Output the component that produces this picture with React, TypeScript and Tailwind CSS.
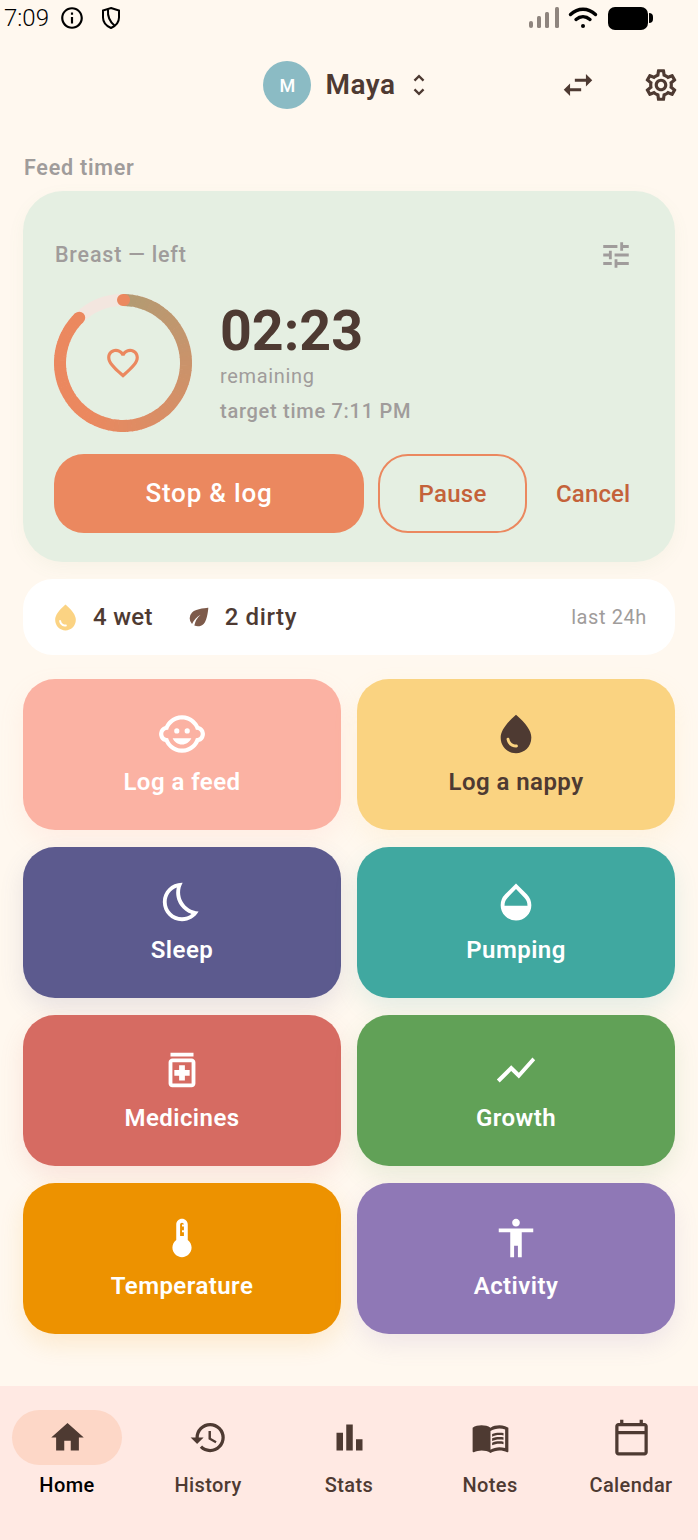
import React from 'react';
import {
  MdAccessibility,
  MdBarChart,
  MdDeviceThermostat,
  MdEco,
  MdFavoriteBorder,
  MdHistory,
  MdHome,
  MdMenuBook,
  MdOpacity,
  MdOutlineBedtime,
  MdOutlineCalendarToday,
  MdOutlineChildCare,
  MdOutlineInfo,
  MdOutlineMedication,
  MdOutlineSettings,
  MdShowChart,
  MdSwapHoriz,
  MdTune,
  MdUnfoldMore,
  MdWaterDrop,
} from 'react-icons/md';

const tiles = [
  { label: 'Log a feed', Icon: MdOutlineChildCare, size: 50, box: 'bg-[#fbb2a3] text-white shadow-[0_10px_24px_rgba(252,176,161,0.14)]' },
  { label: 'Log a nappy', Icon: MdWaterDrop, size: 46, box: 'bg-[#fad381] text-[#4e3a32] shadow-[0_10px_24px_rgba(251,211,131,0.14)]' },
  { label: 'Sleep', Icon: MdOutlineBedtime, size: 46, box: 'bg-[#5c5a8e] text-white shadow-[0_10px_24px_rgba(92,90,142,0.14)]' },
  { label: 'Pumping', Icon: MdOpacity, size: 46, box: 'bg-[#40a8a0] text-white shadow-[0_10px_24px_rgba(64,168,160,0.14)]' },
  { label: 'Medicines', Icon: MdOutlineMedication, size: 46, box: 'bg-[#d66b62] text-white shadow-[0_10px_24px_rgba(214,107,98,0.14)]' },
  { label: 'Growth', Icon: MdShowChart, size: 46, box: 'bg-[#61a157] text-white shadow-[0_10px_24px_rgba(97,161,87,0.14)]' },
  { label: 'Temperature', Icon: MdDeviceThermostat, size: 46, box: 'bg-[#ed9200] text-white shadow-[0_10px_24px_rgba(237,146,0,0.14)]' },
  { label: 'Activity', Icon: MdAccessibility, size: 46, box: 'bg-[#8f78b6] text-white shadow-[0_10px_24px_rgba(143,120,182,0.14)]' },
];

const navItems = [
  { label: 'Home', Icon: MdHome, active: true },
  { label: 'History', Icon: MdHistory, active: false },
  { label: 'Stats', Icon: MdBarChart, active: false },
  { label: 'Notes', Icon: MdMenuBook, active: false },
  { label: 'Calendar', Icon: MdOutlineCalendarToday, active: false },
];

// progress ring, split into short arcs so the colour can sweep from tan to orange
const TimerRing = () => {
  const cx = 69;
  const cy = 69;
  const r = 63;
  const point = (deg: number) => {
    const rad = ((deg - 90) * Math.PI) / 180;
    return `${cx + r * Math.cos(rad)} ${cy + r * Math.sin(rad)}`;
  };
  const from = [178, 155, 115];
  const to = [235, 136, 95];
  const segments = [];
  for (let a = 0; a < 316; a += 4) {
    const t = Math.min(a / 210, 1);
    const c = from.map((v, i) => Math.round(v + (to[i] - v) * t));
    segments.push(
      <path
        key={a}
        d={`M${point(a)} A${r} ${r} 0 0 1 ${point(Math.min(a + 4.6, 316))}`}
        stroke={`rgb(${c.join(',')})`}
        strokeWidth={12}
        fill="none"
      />,
    );
  }
  return (
    <svg width={138} height={138} viewBox="0 0 138 138">
      <circle cx={cx} cy={cy} r={r} stroke="#f3e6df" strokeWidth={12} fill="none" />
      {segments}
      <path
        d={`M${point(0)} A${r} ${r} 0 0 1 ${point(1)}`}
        stroke="#eb885f"
        strokeWidth={12}
        strokeLinecap="round"
        fill="none"
      />
      <path
        d={`M${point(315)} A${r} ${r} 0 0 1 ${point(316)}`}
        stroke="#eb885f"
        strokeWidth={12}
        strokeLinecap="round"
        fill="none"
      />
    </svg>
  );
};

const StatusBar = () => (
  <div className="flex h-[36px] items-center justify-between pl-[4px] pr-[45px] text-black">
    <div className="flex items-center">
      <span className="text-[24px] font-light leading-none">7:09</span>
      <MdOutlineInfo size={26} className="ml-[10px]" />
      <svg width={24} height={24} viewBox="0 0 24 24" fill="none" stroke="currentColor" strokeWidth={2} className="ml-[14px]">
        <path d="M12 2 20 4.500v7c0 4.600-3.200 8.400-8 10.500-4.800-2.100-8-5.900-8-10.500v-7z" />
        <path d="M9 3.500c-.5 6 1.500 12 6.500 16" />
      </svg>
    </div>
    <div className="flex items-center">
      <svg width={31} height={22} viewBox="0 0 31 22" fill="#8f857e">
        <rect x={0} y={14} width={4} height={7} rx={2} />
        <rect x={8} y={9} width={4} height={12} rx={1.5} />
        <rect x={16} y={5} width={4} height={16} rx={1.5} />
        <rect x={26} y={0} width={4} height={21} rx={1.5} />
      </svg>
      <svg width={30} height={24} viewBox="0 0 30 24" fill="none" stroke="currentColor" strokeWidth={3.4} strokeLinecap="round" className="ml-[8px]">
        <path d="M2.500 8.500C10 1.500 20 1.500 27.500 8.500" />
        <path d="M8 13.500c4.200-3.600 9.800-3.600 14 0" />
        <circle cx={15} cy={20} r={2} fill="currentColor" stroke="none" />
      </svg>
      <div className="ml-[10px] h-[23px] w-[40px] rounded-[7px] bg-black" />
      <div className="ml-[1px] h-[10px] w-[4px] rounded-r-sm bg-black" />
    </div>
  </div>
);

const Header = () => (
  <div className="relative mt-[24px] flex h-[50px] items-center justify-center text-[#4e3a32]">
    <div className="flex items-center pr-[2px]">
      <div className="flex h-[48px] w-[48px] items-center justify-center rounded-full bg-[#8bbbc4] text-[18px] font-medium text-white">
        M
      </div>
      <span className="ml-[14px] text-[28px] font-semibold leading-none tracking-[0.5px]">Maya</span>
      <MdUnfoldMore size={28} className="ml-[9px]" />
    </div>
    <MdSwapHoriz size={38} className="absolute left-[559px] top-[6px]" />
    <MdOutlineSettings size={38} className="absolute left-[642px] top-[6px]" />
  </div>
);

const TimerCard = () => (
  <div className="mt-[10px] h-[371px] rounded-[40px] bg-[#e5efe2] px-[31px] pt-[47px] shadow-[0_6px_18px_rgba(120,150,110,0.06)]">
    <div className="flex items-center justify-between pl-[1px] pr-[11px]">
      <span className="text-[21.5px] font-medium leading-[34px] tracking-[0.8px] text-[#a09c9b]">Breast — left</span>
      <MdTune size={34} className="text-[#a09c9b]" />
    </div>
    <div className="mt-[22px] flex">
      <div className="relative h-[138px] w-[138px]">
        <TimerRing />
        <MdFavoriteBorder size={38} className="absolute left-[50px] top-[50px] text-[#eb885f]" />
      </div>
      <div className="ml-[28px] flex flex-col">
        <span className="mt-[7px] text-[55.5px] font-bold leading-[62px] text-[#4e3a32]">02:23</span>
        <span className="text-[20px] leading-[26px] tracking-[0.65px] text-[#a09c9b]">remaining</span>
        <span className="mt-[8px] text-[20px] font-medium leading-[28px] tracking-[0.72px] text-[#a09c9b]">target time 7:11 PM</span>
      </div>
    </div>
    <div className="mt-[22px] flex items-center">
      <button className="h-[79px] w-[310px] rounded-[30px] bg-[#eb885f] text-[26px] font-medium tracking-[0.8px] text-white">
        Stop &amp; log
      </button>
      <button className="ml-[14px] h-[79px] w-[149px] rounded-[30px] border-2 border-[#eb885f] text-[24px] font-medium tracking-[0.3px] text-[#c4623a]">
        Pause
      </button>
      <span className="ml-[29px] text-[24px] font-medium tracking-[0.15px] text-[#c4623a]">Cancel</span>
    </div>
  </div>
);

const CountsRow = () => (
  <div className="mt-[17px] flex h-[76px] items-center rounded-[30px] bg-white pl-[27px] pr-[28px] text-[#4e3a32]">
    <MdWaterDrop size={31} className="text-[#fbd383]" />
    <span className="ml-[12px] text-[24px] font-medium tracking-[0.3px]">4 wet</span>
    <MdEco size={28} className="ml-[32px] text-[#7d5a4a]" />
    <span className="ml-[12px] text-[24px] font-medium tracking-[0.6px]">2 dirty</span>
    <span className="ml-auto text-[20px] tracking-[0.6px] text-[#a09c9b]">last 24h</span>
  </div>
);

const BottomNav = () => (
  <div className="flex h-[154px] justify-between bg-[#ffe9e3] px-[12px] pt-[24px]">
    {navItems.map(({ label, Icon, active }) => (
      <div key={label} className="flex w-[110px] flex-col items-center">
        <div className={`flex h-[55px] w-[110px] items-center justify-center rounded-full text-[#4e3a32] ${active ? 'bg-[#fdd7c7]' : ''}`}>
          <Icon size={39} />
        </div>
        <span className={`mt-[6px] whitespace-nowrap text-[20px] font-medium leading-[28px] tracking-[0.4px] ${active ? 'text-black' : 'text-[#4e3a32]'}`}>
          {label}
        </span>
      </div>
    ))}
  </div>
);

export default function App() {
  return (
    <div className="flex h-[1540px] w-[698px] flex-col overflow-hidden bg-[#fff8ef] font-['Roboto',sans-serif]">
      <StatusBar />
      <Header />
      <div className="flex-1 pl-[23px] pr-[23px]">
        <div className="mt-[45px] pl-[1px] text-[21.5px] font-semibold leading-[26px] tracking-[0.75px] text-[#a09c9b]">Feed timer</div>
        <TimerCard />
        <CountsRow />
        <div className="mt-[24px] grid grid-cols-2 gap-x-[16px] gap-y-[17px]">
          {tiles.map(({ label, Icon, size, box }) => (
            <button key={label} className={`flex h-[151px] flex-col items-center rounded-[32px] pt-[30px] ${box}`}>
              <span className="flex h-[50px] items-center">
                <Icon size={size} />
              </span>
              <span className="mt-[7px] text-[24px] font-semibold leading-[32px] tracking-[0.45px]">{label}</span>
            </button>
          ))}
        </div>
      </div>
      <BottomNav />
    </div>
  );
}
